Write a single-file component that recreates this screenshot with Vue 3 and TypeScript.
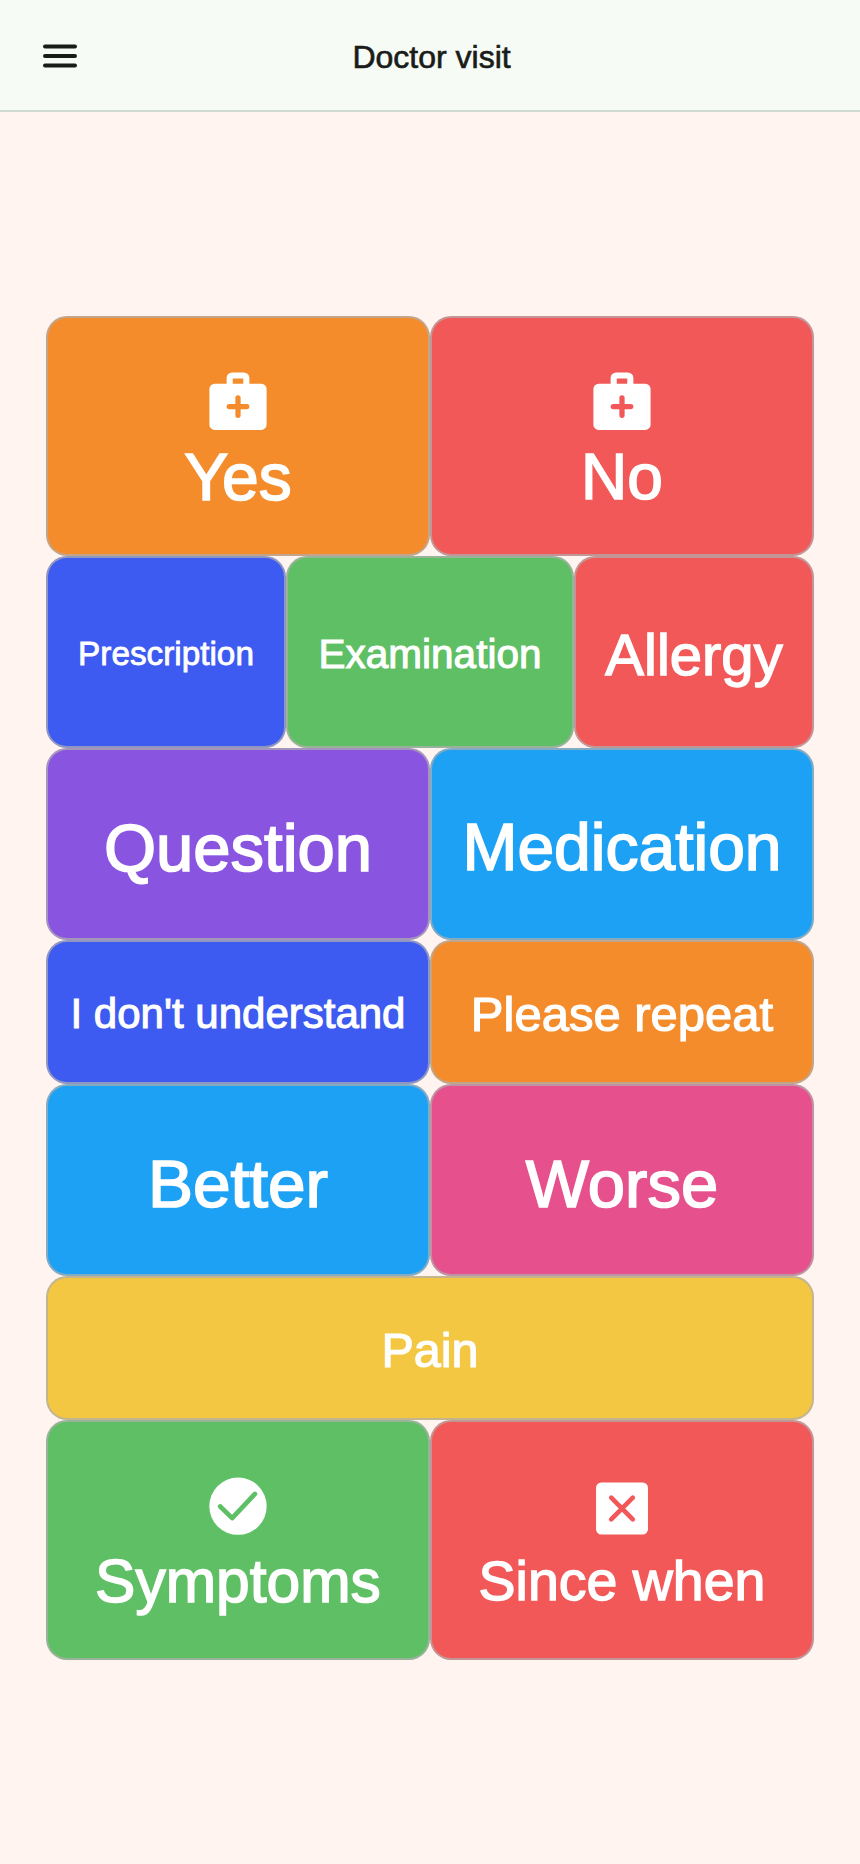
<script setup lang="ts">
type Icon = 'case' | 'check' | 'cross' | null

interface Tile {
  label: string
  color: string
  cols: number
  rows: number
  size: number
  icon: Icon
}

const orange = '#f48c2c'
const red = '#f25858'
const blue = '#3d5af1'
const green = '#5fbf65'
const purple = '#8955e0'
const sky = '#1ca1f4'
const pink = '#e6508c'
const yellow = '#f4c742'

const tiles: Tile[] = [
  { label: 'Yes', color: orange, cols: 8, rows: 5, size: 66, icon: 'case' },
  { label: 'No', color: red, cols: 8, rows: 5, size: 64, icon: 'case' },
  { label: 'Prescription', color: blue, cols: 5, rows: 4, size: 33.3, icon: null },
  { label: 'Examination', color: green, cols: 6, rows: 4, size: 40.5, icon: null },
  { label: 'Allergy', color: red, cols: 5, rows: 4, size: 58, icon: null },
  { label: 'Question', color: purple, cols: 8, rows: 4, size: 67, icon: null },
  { label: 'Medication', color: sky, cols: 8, rows: 4, size: 66, icon: null },
  { label: "I don't understand", color: blue, cols: 8, rows: 3, size: 42, icon: null },
  { label: 'Please repeat', color: orange, cols: 8, rows: 3, size: 49, icon: null },
  { label: 'Better', color: sky, cols: 8, rows: 4, size: 67.5, icon: null },
  { label: 'Worse', color: pink, cols: 8, rows: 4, size: 67, icon: null },
  { label: 'Pain', color: yellow, cols: 16, rows: 3, size: 48.5, icon: null },
  { label: 'Symptoms', color: green, cols: 8, rows: 5, size: 60.5, icon: 'check' },
  { label: 'Since when', color: red, cols: 8, rows: 5, size: 55.5, icon: 'cross' },
]
</script>

<template>
  <div class="page">
    <header class="top-bar">
      <button class="menu-button" aria-label="Menu">
        <svg width="34" height="24" viewBox="0 0 34 24" fill="none" stroke="#1a1c1a" stroke-width="4" stroke-linecap="round">
          <path d="M2 2.500h30M2 12h30M2 21.500h30" />
        </svg>
      </button>
      <h1 class="title">Doctor visit</h1>
    </header>

    <main class="content">
      <div class="board">
        <button
          v-for="tile in tiles"
          :key="tile.label"
          class="tile"
          :class="{ 'has-icon': tile.icon }"
          :style="{
            background: tile.color,
            gridColumn: `span ${tile.cols}`,
            gridRow: `span ${tile.rows}`,
            fontSize: `${tile.size}px`,
          }"
        >
          <svg v-if="tile.icon" class="tile-icon" viewBox="0 0 24 24" width="70" height="70">
            <template v-if="tile.icon === 'case'">
              <path
                fill="#fff"
                fill-rule="evenodd"
                d="M10 2.200h4a1.900 1.900 0 0 1 1.900 1.900V6.100h4.100a1.800 1.800 0 0 1 1.800 1.800V20.100a1.800 1.800 0 0 1-1.800 1.800H4a1.800 1.800 0 0 1-1.800-1.800V7.900A1.800 1.800 0 0 1 4 6.100h4.100V4.100A1.900 1.900 0 0 1 10 2.200ZM10.200 4.300V6.100h3.600V4.300Z"
              />
              <path d="M12 10.900v6M9 13.900h6" fill="none" :stroke="tile.color" stroke-width="1.800" stroke-linecap="round" />
            </template>
            <template v-else-if="tile.icon === 'check'">
              <circle cx="12" cy="12.400" r="9.830" fill="#fff" />
              <path d="M5.900 12.500 10 16.500 17.800 8.200" fill="none" :stroke="tile.color" stroke-width="1.600" stroke-linecap="round" stroke-linejoin="round" />
            </template>
            <template v-else>
              <rect x="3.100" y="4.300" width="17.800" height="17.800" rx="1.800" fill="#fff" />
              <path d="M8.300 9.500l7.400 7.400M15.700 9.500l-7.400 7.400" fill="none" :stroke="tile.color" stroke-width="1.600" stroke-linecap="round" />
            </template>
          </svg>
          <span class="tile-label">{{ tile.label }}</span>
        </button>
      </div>
    </main>
  </div>
</template>

<style>
html,
body {
  margin: 0;
  background: #fff4ef;
}
</style>

<style scoped>
.page {
  display: flex;
  flex-direction: column;
  min-height: 1864px;
  background: #fff4ef;
  font-family: "Liberation Sans", Arial, sans-serif;
}

/* TOP BAR */
.top-bar {
  display: grid;
  grid-template-columns: 1fr auto 1fr;
  align-items: center;
  box-sizing: border-box;
  height: 112px;
  padding: 0 40px 0 43px;
  background: #f6fbf5;
  border-bottom: 2px solid #cfd8d3;
}

.menu-button {
  justify-self: start;
  display: flex;
  margin-top: 2px;
  padding: 0;
  border: none;
  background: none;
}

.title {
  margin: 0;
  padding-top: 4px;
  font-size: 32px;
  font-weight: 400;
  color: #1a1c1a;
  -webkit-text-stroke: 0.02em #1a1c1a;
}

/* BOARD */
.content {
  flex: 1;
  display: flex;
  align-items: center;
  justify-content: center;
}

.board {
  display: grid;
  grid-template-columns: repeat(16, 48px);
  grid-auto-rows: 48px;
}

.tile {
  display: flex;
  flex-direction: column;
  align-items: center;
  justify-content: center;
  box-sizing: border-box;
  min-width: 0;
  padding: 0;
  border: 2px solid rgba(175, 175, 175, 0.72);
  border-radius: 21px;
  color: #fff;
  font-family: inherit;
}

.tile-icon {
  display: block;
  flex: none;
}

.tile-label {
  padding-top: 0.1em;
  white-space: nowrap;
  -webkit-text-stroke: 0.025em #fff;
}

.has-icon .tile-label {
  margin: 6px 0 -6px;
  padding-top: 0;
  line-height: 71px;
}
</style>
